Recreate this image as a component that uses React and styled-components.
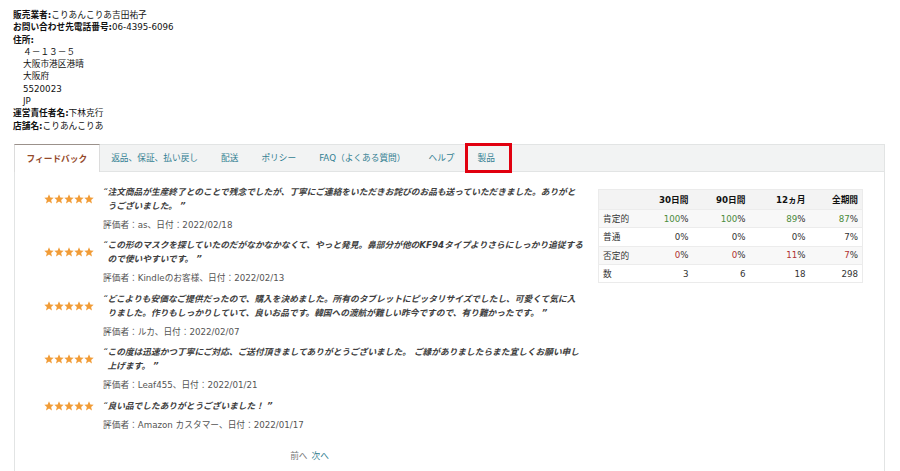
import React from 'react';
import styled, { createGlobalStyle } from 'styled-components';

const Global = createGlobalStyle`
  html, body { margin: 0; padding: 0; background: #fff; }
  body {
    font-family: "DejaVu Sans", "Noto Sans CJK JP", sans-serif;
    font-size: 8.7px;
    color: #111;
  }
`;

const Page = styled.div`
  width: 900px;
  height: 471px;
  overflow: hidden;
`;

const SellerInfo = styled.div`
  padding: 9px 0 0 13px;
  line-height: 12.3px;
`;

const InfoLine = styled.div`
  padding-left: ${(p) => (p.$indent ? '10px' : '0')};
  white-space: nowrap;
`;

const Label = styled.span`
  font-weight: 700;
`;

const TabBar = styled.div`
  display: flex;
  height: 26px;
  margin: 12px 15px 0 14px;
  background: #f2f3f3;
  border: 1px solid #e2e4e4;
`;

const Tab = styled.div`
  position: relative;
  display: flex;
  align-items: center;
  padding: 0 11.5px;
  color: ${(p) => (p.$active ? '#94492a' : '#337f92')};
  background: ${(p) => (p.$active ? '#fff' : 'transparent')};
  font-weight: ${(p) => (p.$active ? 700 : 400)};
  white-space: nowrap;
  ${(p) =>
    p.$active &&
    `
    margin: -1px 0 -1px -1px;
    border-left: 1px solid #dcdcdc;
    border-right: 1px solid #dcdcdc;
    border-top: 1px solid #9b918b;
    padding: 0 11.5px 0 11.5px;
  `}
`;

const Highlight = styled.span`
  position: absolute;
  left: -1px;
  right: -6px;
  top: -2px;
  bottom: -2px;
  border: 3px solid #e1000f;
  pointer-events: none;
`;

const Panel = styled.div`
  display: flex;
  gap: 13px;
  margin: 0 15px 0 14px;
  padding: 13px 22px 0 29px;
  border-left: 1px solid #e2e4e4;
  border-right: 1px solid #e2e4e4;
  height: 300px;
  box-sizing: border-box;
`;

const ReviewColumn = styled.div`
  flex: 0 0 541px;
  display: flex;
  flex-direction: column;
  gap: 6.5px;
`;

const Review = styled.div`
  display: grid;
  grid-template-columns: 59px 1fr;
`;

const Stars = styled.div`
  display: flex;
  align-self: center;
`;

const Quote = styled.div`
  padding-left: 4.5px;
  text-indent: -4.5px;
  line-height: 14px;
  font-style: italic;
  font-weight: 700;
  color: #404040;
  white-space: nowrap;
`;

const QuoteMark = styled.span`
  display: inline-block;
  width: 4.5px;
  text-indent: 0;
  font-weight: 400;
`;

const Meta = styled.div`
  grid-column: 2;
  margin-top: 5px;
  line-height: 14px;
  color: #555;
`;

const Pager = styled.div`
  margin-top: 10.5px;
  padding-right: 10px;
  text-align: center;
  line-height: 14px;
  color: #777;
`;

const PagerLink = styled.span`
  color: #337f92;
  margin-left: 4px;
`;

const Table = styled.table`
  flex: 0 0 264px;
  width: 264px;
  margin-top: 4px;
  align-self: flex-start;
  border-collapse: collapse;
  border: 1px solid #ebebeb;
  table-layout: fixed;
`;

const Th = styled.th`
  height: 19px;
  padding: 0 4px;
  background: #f3f3f3;
  font-weight: 700;
  text-align: right;
  color: #111;
`;

const Row = styled.tr`
  background: ${(p) => (p.$shade ? '#f8f8f8' : '#fff')};
  border-top: 1px solid #ececec;
`;

const Td = styled.td`
  height: 17.3px;
  padding: 0 4px;
  text-align: ${(p) => (p.$label ? 'left' : 'right')};
  color: #333;
`;

const Num = styled.span`
  color: ${(p) => (p.$tone === 'good' ? '#4b8b3b' : p.$tone === 'bad' ? '#b03131' : '#333')};
`;

const StarIcon = () => (
  <svg width="10" height="10" viewBox="0 0 10 10">
    <polygon
      points="5,0.3 6.35,3.45 9.7,3.7 7.15,5.9 7.95,9.4 5,7.55 2.05,9.4 2.85,5.9 0.3,3.7 3.65,3.45"
      fill="#f19c37"
    />
  </svg>
);

const reviews = [
  {
    lines: [
      '注文商品が生産終了とのことで残念でしたが、丁寧にご連絡をいただきお詫びのお品も送っていただきました。ありがと',
      'うございました。',
    ],
    meta: '評価者：as、日付：2022/02/18',
  },
  {
    lines: [
      'この形のマスクを探していたのだがなかなかなくて、やっと発見。鼻部分が他のKF94タイプよりさらにしっかり追従する',
      'ので使いやすいです。',
    ],
    meta: '評価者：Kindleのお客様、日付：2022/02/13',
  },
  {
    lines: [
      'どこよりも安価なご提供だったので、購入を決めました。所有のタブレットにピッタリサイズでしたし、可愛くて気に入',
      'りました。作りもしっかりしていて、良いお品です。韓国への渡航が難しい昨今ですので、有り難かったです。',
    ],
    meta: '評価者：ルカ、日付：2022/02/07',
  },
  {
    lines: [
      'この度は迅速かつ丁寧にご対応、ご送付頂きましてありがとうございました。 ご縁がありましたらまた宜しくお願い申し',
      '上げます。',
    ],
    meta: '評価者：Leaf455、日付：2022/01/21',
  },
  {
    lines: ['良い品でしたありがとうございました！'],
    meta: '評価者：Amazon カスタマー、日付：2022/01/17',
  },
];

const tabs = ['フィードバック', '返品、保証、払い戻し', '配送', 'ポリシー', 'FAQ（よくある質問）', 'ヘルプ', '製品'];

const stats = [
  { label: '肯定的', tone: 'good', values: ['100', '100', '89', '87'], pct: true },
  { label: '普通', tone: 'plain', values: ['0', '0', '0', '7'], pct: true },
  { label: '否定的', tone: 'bad', values: ['0', '0', '11', '7'], pct: true },
  { label: '数', tone: 'plain', values: ['3', '6', '18', '298'], pct: false },
];

const colWidths = [46, 48, 57, 60, 53];

export default function App() {
  return (
    <Page>
      <Global />
      <SellerInfo>
        <InfoLine>
          <Label>販売業者:</Label>こりあんこりあ吉田祐子
        </InfoLine>
        <InfoLine>
          <Label>お問い合わせ先電話番号:</Label>06-4395-6096
        </InfoLine>
        <InfoLine>
          <Label>住所:</Label>
        </InfoLine>
        <InfoLine $indent>４－１３－５</InfoLine>
        <InfoLine $indent>大阪市港区港晴</InfoLine>
        <InfoLine $indent>大阪府</InfoLine>
        <InfoLine $indent>5520023</InfoLine>
        <InfoLine $indent>JP</InfoLine>
        <InfoLine>
          <Label>運営責任者名:</Label>下林克行
        </InfoLine>
        <InfoLine>
          <Label>店舗名:</Label>こりあんこりあ
        </InfoLine>
      </SellerInfo>

      <TabBar>
        {tabs.map((t, i) => (
          <Tab key={t} $active={i === 0}>
            {t}
            {t === '製品' && <Highlight />}
          </Tab>
        ))}
      </TabBar>

      <Panel>
        <ReviewColumn>
          {reviews.map((r) => (
            <Review key={r.meta}>
              <Stars>
                {[0, 1, 2, 3, 4].map((s) => (
                  <StarIcon key={s} />
                ))}
              </Stars>
              <Quote>
                <QuoteMark>“</QuoteMark>
                {r.lines.map((l, li) => (
                  <React.Fragment key={li}>
                    {li > 0 && <br />}
                    {l}
                    {li === r.lines.length - 1 && ' ”'}
                  </React.Fragment>
                ))}
              </Quote>
              <Meta>{r.meta}</Meta>
            </Review>
          ))}
          <Pager>
            前へ<PagerLink>次へ</PagerLink>
          </Pager>
        </ReviewColumn>

        <Table>
          <colgroup>
            {colWidths.map((w, i) => (
              <col key={i} style={{ width: w }} />
            ))}
          </colgroup>
          <thead>
            <tr>
              <Th />
              <Th>30日間</Th>
              <Th>90日間</Th>
              <Th>12ヵ月</Th>
              <Th>全期間</Th>
            </tr>
          </thead>
          <tbody>
            {stats.map((row, ri) => (
              <Row key={row.label} $shade={ri % 2 === 0}>
                <Td $label>{row.label}</Td>
                {row.values.map((v, vi) => (
                  <Td key={vi}>
                    <Num $tone={row.tone}>{v}</Num>
                    {row.pct && '%'}
                  </Td>
                ))}
              </Row>
            ))}
          </tbody>
        </Table>
      </Panel>
    </Page>
  );
}
